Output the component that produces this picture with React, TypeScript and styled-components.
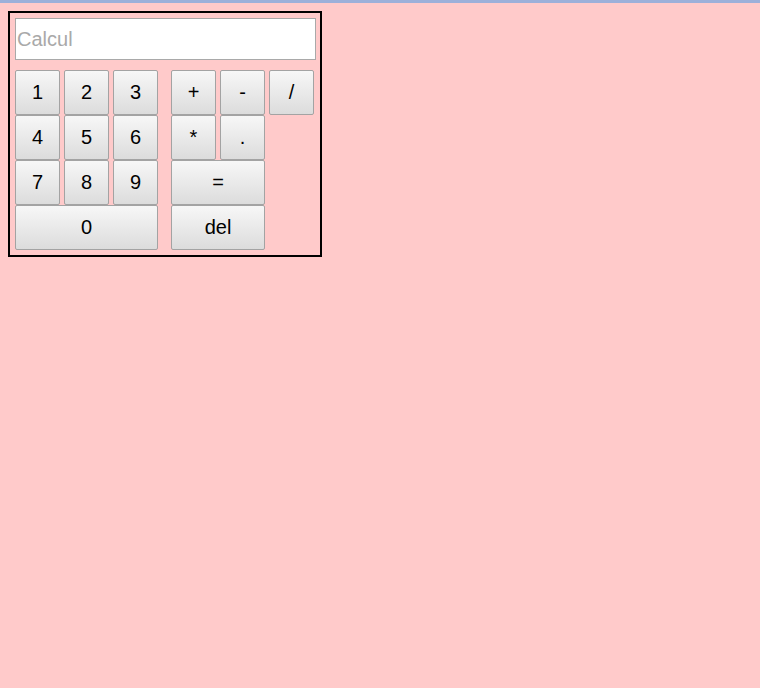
import React from "react";
import styled, { createGlobalStyle } from "styled-components";

const Global = createGlobalStyle`
  html {
    background: #ffcaca;
    border-top: 3px solid #9cb0da;
    min-height: 100%;
  }
  body {
    margin: 8px;
    font-family: "Liberation Sans", Arial, sans-serif;
  }
`;

const Box = styled.div`
  display: inline-flex;
  flex-direction: column;
  border: 2px solid #000;
  padding: 5px 4px 5px 5px;
  width: 301px;
  box-sizing: content-box;
`;

const Display = styled.input`
  box-sizing: border-box;
  width: 301px;
  height: 42px;
  margin: 0 0 10px 0;
  padding: 1px;
  border: 1px solid #a9a9a9;
  background: #fff;
  font-family: "Liberation Sans", Arial, sans-serif;
  font-size: 20px;
  color: #000;
  outline: none;
  &::placeholder {
    color: #a9a9a9;
  }
`;

const Keypad = styled.div`
  display: flex;
  align-items: flex-start;
  gap: 13px;
`;

const Grid = styled.div`
  display: grid;
  grid-template-columns: repeat(3, 45px);
  grid-auto-rows: 45px;
  column-gap: 4px;
  row-gap: 0;
`;

const Key = styled.button<{ $span?: number }>`
  grid-column: span ${(p) => p.$span ?? 1};
  box-sizing: border-box;
  margin: 0;
  padding: 0;
  height: 45px;
  border: 1px solid #a3a3a3;
  border-radius: 2px;
  background: linear-gradient(to bottom, #f7f7f7, #dcdcdc);
  font-family: "Liberation Sans", Arial, sans-serif;
  font-size: 20px;
  color: #000;
  cursor: pointer;
`;

export default function App() {
  const [value, setValue] = React.useState("");
  const press = (k: string) => {
    if (k === "del") setValue((v) => v.slice(0, -1));
    else if (k === "=") {
      try {
        // eslint-disable-next-line no-new-func
        const r = Function(`return (${value})`)();
        setValue(String(r));
      } catch {
        setValue("");
      }
    } else setValue((v) => v + k);
  };
  return (
    <>
      <Global />
      <Box>
        <Display
          placeholder="Calcul"
          value={value}
          onChange={(e) => setValue(e.target.value)}
        />
        <Keypad>
          <Grid>
            {["1", "2", "3", "4", "5", "6", "7", "8", "9"].map((k) => (
              <Key key={k} onClick={() => press(k)}>
                {k}
              </Key>
            ))}
            <Key $span={3} onClick={() => press("0")}>
              0
            </Key>
          </Grid>
          <Grid>
            <Key onClick={() => press("+")}>+</Key>
            <Key onClick={() => press("-")}>-</Key>
            <Key onClick={() => press("/")}>/</Key>
            <Key onClick={() => press("*")}>*</Key>
            <Key onClick={() => press(".")}>.</Key>
            <span />
            <Key $span={2} onClick={() => press("=")}>
              =
            </Key>
            <span />
            <Key $span={2} onClick={() => press("del")}>
              del
            </Key>
          </Grid>
        </Keypad>
      </Box>
    </>
  );
}
